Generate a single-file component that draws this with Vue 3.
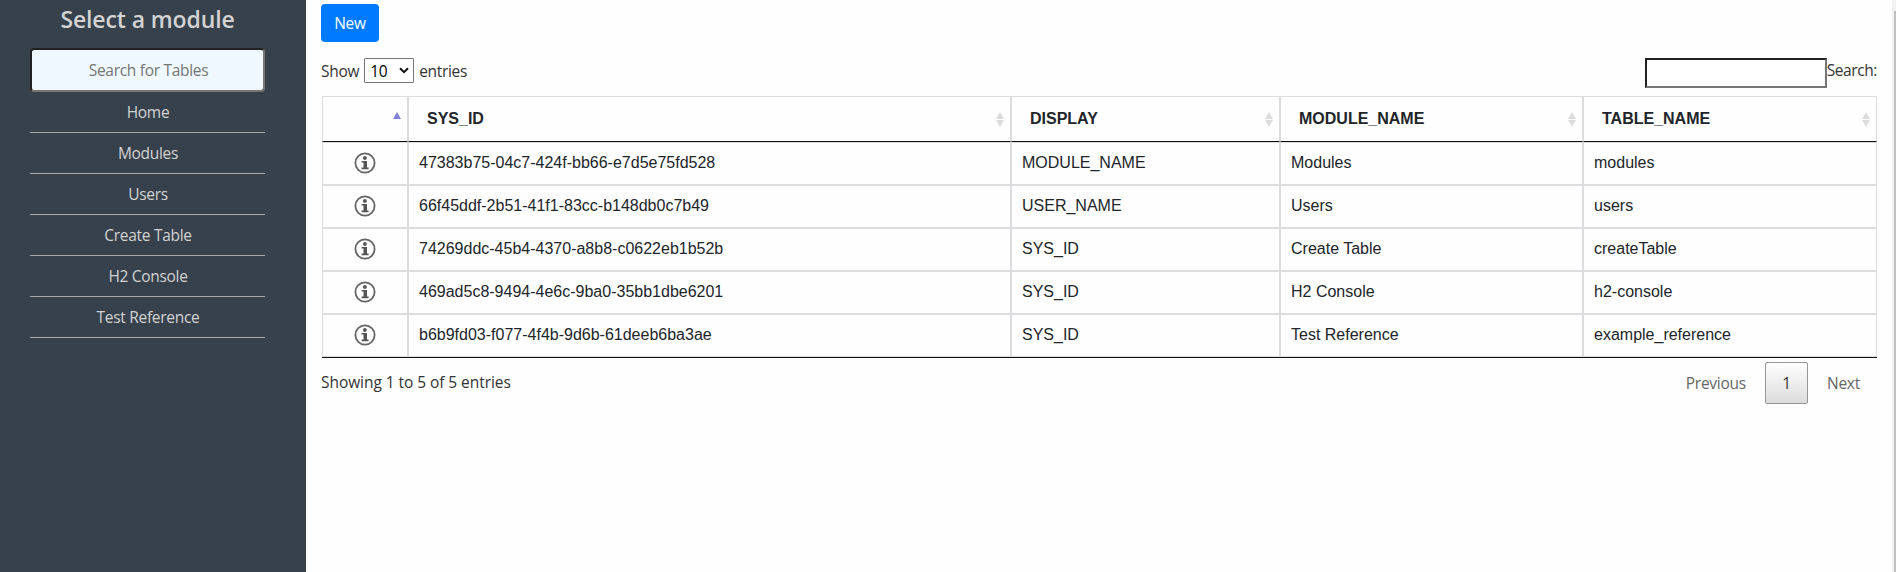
<script setup>
import { ref } from 'vue'

const modules = ['Home', 'Modules', 'Users', 'Create Table', 'H2 Console', 'Test Reference']
const columns = ['SYS_ID', 'DISPLAY', 'MODULE_NAME', 'TABLE_NAME']
const rows = [
  ['47383b75-04c7-424f-bb66-e7d5e75fd528', 'MODULE_NAME', 'Modules', 'modules'],
  ['66f45ddf-2b51-41f1-83cc-b148db0c7b49', 'USER_NAME', 'Users', 'users'],
  ['74269ddc-45b4-4370-a8b8-c0622eb1b52b', 'SYS_ID', 'Create Table', 'createTable'],
  ['469ad5c8-9494-4e6c-9ba0-35bb1dbe6201', 'SYS_ID', 'H2 Console', 'h2-console'],
  ['b6b9fd03-f077-4f4b-9d6b-61deeb6ba3ae', 'SYS_ID', 'Test Reference', 'example_reference'],
]
const filter = ref('')
const search = ref('')
</script>

<template>
  <div class="page">
    <aside class="sidebar">
      <h4 class="title">Select a module</h4>
      <input v-model="filter" class="filter" type="text" placeholder="Search for Tables" />
      <nav class="menu">
        <a v-for="m in modules" :key="m" class="menu-item"><span>{{ m }}</span></a>
      </nav>
    </aside>

    <main class="content">
      <button class="new-btn">New</button>

      <div class="toolbar">
        <div class="length">
          <span>Show</span>
          <div class="select">
            <span>10</span>
            <svg width="10" height="7" viewBox="0 0 10 7"><path d="M1 1.2 5 5.2 9 1.2" fill="none" stroke="#111" stroke-width="2" /></svg>
          </div>
          <span>entries</span>
        </div>
        <label class="search"><input v-model="search" type="text" /><span>Search:</span></label>
      </div>

      <div class="table">
        <div class="row head">
          <div class="cell">
            <svg class="sort" width="8" height="15" viewBox="0 0 8 15"><path d="M4 0 8 7H0Z" fill="#8080dc" /></svg>
          </div>
          <div v-for="c in columns" :key="c" class="cell">
            <span>{{ c }}</span>
            <svg class="sort" width="8" height="15" viewBox="0 0 8 15"><path d="M4 0 8 7H0ZM0 8H8L4 15Z" fill="#dcdcdc" /></svg>
          </div>
        </div>
        <div v-for="r in rows" :key="r[0]" class="row">
          <div class="cell icon-cell">
            <svg width="22" height="22" viewBox="0 0 22 22">
              <circle cx="11" cy="11" r="9.6" fill="none" stroke="#666" stroke-width="1.8" />
              <circle cx="10.9" cy="6" r="1.9" fill="#555" />
              <path d="M7.6 9H13V15.5H14.6V17.2H7.6V15.5H9.5V10.6H7.6Z" fill="#555" />
            </svg>
          </div>
          <div v-for="(v, i) in r" :key="i" class="cell">{{ v }}</div>
        </div>
      </div>

      <div class="footer">
        <span class="info">Showing 1 to 5 of 5 entries</span>
        <div class="pager">
          <span class="page-link prev">Previous</span>
          <span class="page-link current">1</span>
          <span class="page-link next">Next</span>
        </div>
      </div>
    </main>
    <div class="scrollbar"><div class="thumb"></div></div>
  </div>
</template>

<style>
body {
  margin: 0;
  overflow: hidden;
}
</style>

<style scoped>
* {
  box-sizing: border-box;
}
.page {
  display: flex;
  height: 572px;
  background: #fefefe;
  font: 15.5px/24px 'Open Sans', 'Noto Sans', sans-serif;
  letter-spacing: -0.25px;
  color: #333;
}
.sidebar {
  width: 306px;
  padding: 5px 41px 0 30px;
  background: #36414c;
  text-align: center;
  color: #d3d3d3;
}
.title {
  margin: 0 0 14px;
  font-size: 23px;
  line-height: 29px;
  font-weight: 600;
  letter-spacing: -0.12px;
}
.filter {
  display: block;
  width: 235px;
  height: 44px;
  padding: 0 1px 0 3px;
  border: 2px solid;
  border-color: #212121 #767676 #767676 #212121;
  border-radius: 4px;
  background: #f0f8ff;
  font: inherit;
  letter-spacing: -0.3px;
  text-align: center;
}
.filter::placeholder {
  color: #757575;
}
.menu-item {
  display: block;
  height: 41px;
  padding: 8px 0 0 1px;
  border-bottom: 1px solid #a9a9a9;
  letter-spacing: -0.3px;
}
.content {
  flex: 1;
  padding: 4px 15px 0;
}
.new-btn {
  display: block;
  width: 58px;
  height: 38px;
  padding: 0;
  border: 0;
  border-radius: 4px;
  background: #007bff;
  color: #fff;
  font: inherit;
  letter-spacing: inherit;
}
.toolbar {
  display: flex;
  justify-content: space-between;
  align-items: flex-start;
  height: 54px;
  padding-top: 16px;
}
.length {
  display: flex;
  align-items: center;
  gap: 5px;
  height: 25px;
  letter-spacing: -0.3px;
}
.select {
  display: flex;
  align-items: center;
  justify-content: space-between;
  width: 50px;
  height: 25px;
  padding: 0 4px 0 5px;
  border: 1px solid #767676;
  border-radius: 1px;
  background: #fff;
  color: #000;
}
.search {
  display: flex;
  letter-spacing: -0.4px;
}
.search input {
  width: 182px;
  height: 30px;
  border: 2px solid;
  border-color: #212121 #767676 #767676 #212121;
  background: #fff;
}
.table {
  margin-left: 1px;
  width: 1555px;
  border-bottom: 1px solid #111;
  font: 16px/24px 'Liberation Sans', Arial, sans-serif;
  letter-spacing: 0;
  color: #212529;
}
.row {
  display: grid;
  grid-template-columns: 86px 603px 269px 303px 294px;
  height: 43px;
}
.cell {
  padding: 8px 9px 0 10px;
  border: 1px solid #dcdcdf;
}
.head {
  height: 46px;
  font-weight: 700;
}
.head .cell {
  display: flex;
  justify-content: space-between;
  padding: 10px 6px 0 18px;
  border-bottom-color: #111;
}
.head .cell:first-child {
  justify-content: flex-end;
}
.sort {
  margin-top: 5px;
}
.cell.icon-cell {
  display: flex;
  justify-content: center;
  padding: 9px 1px 0 0;
}
.footer {
  display: flex;
  justify-content: space-between;
  padding-top: 4px;
}
.info {
  padding-top: 8px;
  letter-spacing: -0.06px;
}
.pager {
  display: flex;
  gap: 2px;
}
.page-link {
  height: 42px;
  padding: 9px 17px 0 17px;
  color: #666;
}
.page-link.current {
  width: 43px;
  padding: 8px 0 0;
  border: 1px solid #979797;
  border-radius: 2px;
  background: linear-gradient(#fff, #dcdcdc);
  color: #333;
  text-align: center;
}
.scrollbar {
  width: 4px;
  padding: 11px 0 0 2px;
  background: #f1f1f1;
}
.thumb {
  height: 100%;
  background: #c1c1c1;
}
</style>
